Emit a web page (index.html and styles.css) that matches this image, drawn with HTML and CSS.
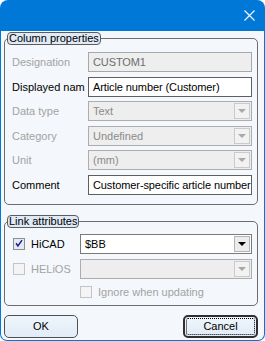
FILE: index.html
```html
<!DOCTYPE html>
<html>
<head>
<meta charset="utf-8">
<link rel="stylesheet" href="styles.css">
</head>
<body>
<div class="window">
  <div class="titlebar">
    <svg class="close" width="11" height="11" viewBox="0 0 11 11"><path d="M0.5 0.5 L10.5 10.5 M10.5 0.5 L0.5 10.5" stroke="#fff" stroke-width="1.1" fill="none"/></svg>
  </div>
  <div class="client">
    <fieldset class="group g1">
      <legend>Column properties</legend>
      <div class="rows">
        <div class="row"><span class="lbl dis">Designation</span><div class="field dis">CUSTOM1</div></div>
        <div class="row"><span class="lbl">Displayed nam</span><div class="field">Article number (Customer)</div></div>
        <div class="row"><span class="lbl dis">Data type</span><div class="combo dis"><span class="val">Text</span><span class="drop"><i class="arrow"></i></span></div></div>
        <div class="row"><span class="lbl dis">Category</span><div class="combo dis"><span class="val">Undefined</span><span class="drop"><i class="arrow"></i></span></div></div>
        <div class="row"><span class="lbl dis">Unit</span><div class="combo dis"><span class="val">(mm)</span><span class="drop"><i class="arrow"></i></span></div></div>
        <div class="row"><span class="lbl">Comment</span><div class="field">Customer-specific article number</div></div>
      </div>
    </fieldset>
    <fieldset class="group g2">
      <legend>Link attributes</legend>
      <div class="rows2">
        <div class="row2">
          <span class="chk"><svg width="11" height="11" viewBox="0 0 11 11"><path d="M2.3 5.2 L4.3 8.2 L8.8 1.8" stroke="#1c1c9a" stroke-width="1.6" fill="none"/></svg></span>
          <span class="clbl">HiCAD</span>
          <div class="combo wide"><span class="val">$BB</span><span class="drop"><i class="arrow"></i></span></div>
        </div>
        <div class="row2">
          <span class="chk dis"></span>
          <span class="clbl dis">HELiOS</span>
          <div class="combo wide dis"><span class="val"></span><span class="drop"><i class="arrow"></i></span></div>
        </div>
        <div class="row3">
          <span class="chk dis"></span>
          <span class="clbl dis">Ignore when updating</span>
        </div>
      </div>
    </fieldset>
    <div class="buttons">
      <button class="btn">OK</button>
      <button class="btn focus"><span class="focusrect">Cancel</span></button>
    </div>
  </div>
</div>
</body>
</html>
```

FILE: styles.css
```css
html, body {
  margin: 0;
  padding: 0;
  background: #ffffff;
}
.window {
  width: 265px;
  height: 341px;
  display: flex;
  flex-direction: column;
  font-family: "Liberation Sans", Arial, sans-serif;
  font-size: 11px;
  color: #000;
  border-radius: 8px 8px 7px 7px;
  overflow: hidden;
  background: #0078d7;
}
.titlebar {
  height: 31px;
  flex: none;
  display: flex;
  justify-content: flex-end;
  align-items: flex-start;
}
.close {
  margin: 10px 10px 0 0;
}
.client {
  flex: 1;
  margin: 0 1px 1px 1px;
  background: #f4f7fb;
  border-radius: 0 0 6px 6px;
  display: flex;
  flex-direction: column;
}
.group {
  margin: 1px 6px 0 3px;
  padding: 0 5px 0 7px;
  border: 1px solid #6d6d6d;
  border-radius: 5px;
  min-width: 0;
}
.group legend {
  margin-left: -5px;
  padding: 0 1px 0 1px;
  height: 13px;
  line-height: 11px;
  box-sizing: border-box;
  background: #dfeaf6;
  border: 1px solid #5c5c5c;
  border-radius: 4px;
  font-size: 11px;
}
.rows {
  display: flex;
  flex-direction: column;
  gap: 4.6px;
  padding: 7px 0 9px 0;
}
.row {
  display: flex;
  align-items: center;
  height: 20px;
}
.lbl {
  width: 76px;
  flex: none;
  white-space: nowrap;
  overflow: hidden;
}
.dis {
  color: #a3a3a3;
}
.field {
  flex: 1;
  height: 20px;
  box-sizing: border-box;
  border: 1px solid #5f5f5f;
  background: #ffffff;
  padding: 0 0 0 4px;
  line-height: 18px;
  white-space: nowrap;
  overflow: hidden;
  letter-spacing: -0.1px;
}
.field.dis {
  background: #eeeeee;
  border-color: #a8a8a8;
  color: #6d6d6d;
}
.combo {
  flex: 1;
  height: 20px;
  box-sizing: border-box;
  border: 1px solid #7a7a7a;
  background: #ffffff;
  display: flex;
  align-items: center;
  padding: 1px;
}
.combo .val {
  flex: 1;
  padding-left: 3px;
  line-height: 16px;
}
.combo.dis {
  background: #eeeeee;
  border-color: #adadad;
  color: #8a8a8a;
}
.drop {
  width: 16px;
  height: 16px;
  box-sizing: border-box;
  border: 1px solid #b4b4b4;
  background: #ececec;
  display: flex;
  align-items: center;
  justify-content: center;
}
.combo.dis .drop {
  border-color: #cacaca;
  background: #f2f2f2;
}
.arrow {
  width: 0;
  height: 0;
  border-left: 4px solid transparent;
  border-right: 4px solid transparent;
  border-top: 4px solid #000;
}
.combo.dis .arrow {
  border-top-color: #a8a8a8;
}
.g2 {
  margin-top: 10px;
  padding-left: 8px;
}
.g2 legend {
  margin-left: -6px;
}
.rows2 {
  display: flex;
  flex-direction: column;
  padding: 6px 0 5px 0;
  gap: 5px;
}
.row2 {
  display: flex;
  align-items: center;
  height: 20px;
}
.chk {
  width: 12px;
  height: 12px;
  box-sizing: border-box;
  border: 1px solid #8e8f8f;
  background: #e6e9f2;
  flex: none;
  display: flex;
  align-items: center;
  justify-content: center;
}
.chk.dis {
  border-color: #c4c4c4;
  background: #f4f4f4;
}
.clbl {
  margin-left: 6px;
  white-space: nowrap;
}
.row2 .clbl {
  width: 49px;
}
.row2 .combo {
  flex: 1;
}
.row3 {
  display: flex;
  align-items: center;
  height: 16px;
  padding-left: 67px;
}
.buttons {
  display: flex;
  justify-content: space-between;
  margin: 9px 6px 0 3px;
}
.btn {
  width: 74px;
  height: 23px;
  box-sizing: border-box;
  border: 1px solid #505050;
  border-radius: 5px;
  background: linear-gradient(#eef5fc, #e2ecf7);
  font-family: "Liberation Sans", Arial, sans-serif;
  font-size: 11px;
  color: #000;
  padding: 0;
  display: flex;
  align-items: center;
  justify-content: center;
}
.btn.focus {
  width: 75px;
  border: 2px solid #303030;
  padding: 1px;
}
.focusrect {
  flex: 1;
  align-self: stretch;
  border: 1px dotted #000;
  border-radius: 2px;
  display: flex;
  align-items: center;
  justify-content: center;
}
```
